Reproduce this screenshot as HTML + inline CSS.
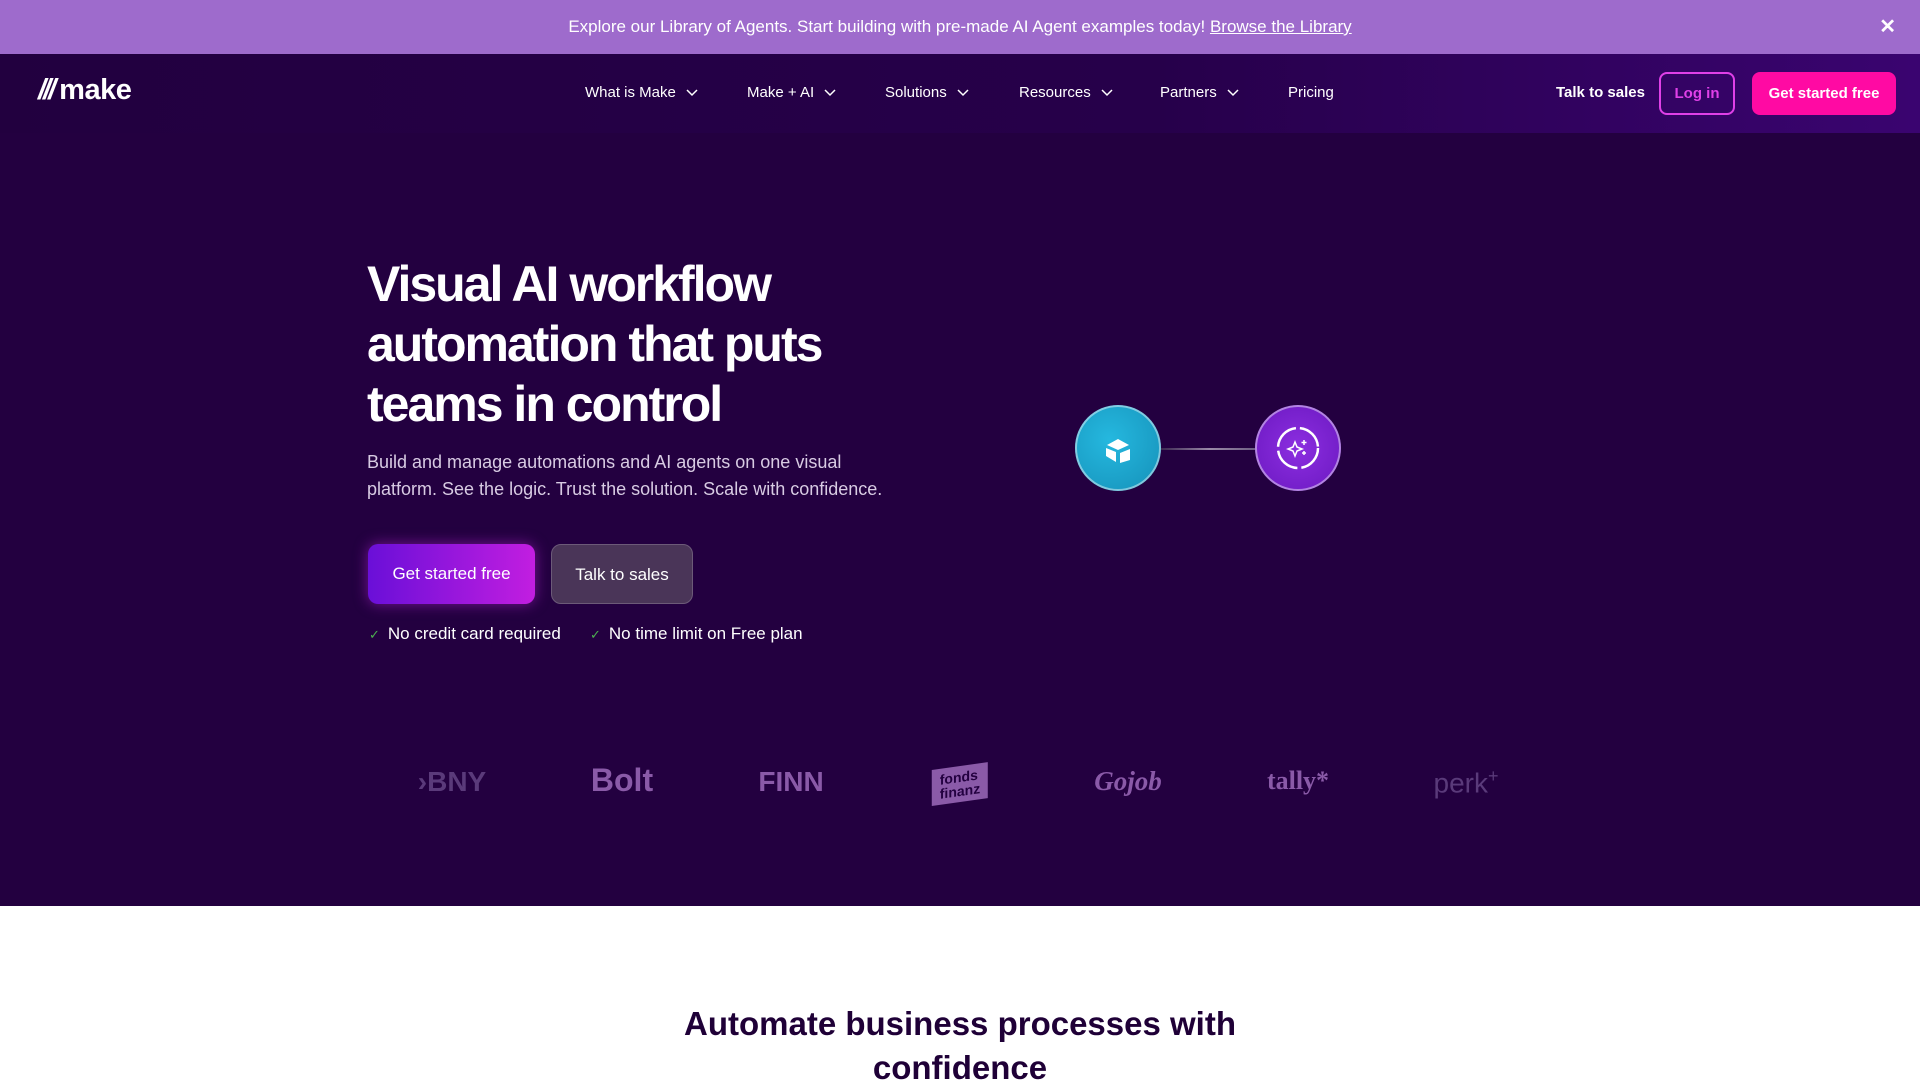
<!DOCTYPE html>
<html><head><meta charset="utf-8"><style>
*{margin:0;padding:0;box-sizing:border-box}
body{width:1920px;height:1080px;overflow:hidden;font-family:"Liberation Sans",sans-serif;background:#fff;position:relative}
.banner{position:absolute;top:0;left:0;width:1920px;height:54px;background:#9e6bcc;color:#fff;font-size:17px;text-align:center;line-height:54px}
.banner u{text-decoration:underline}
.close{position:absolute;right:24px;top:0;font-size:20px;font-weight:bold}
.nav{position:absolute;top:54px;left:0;width:1920px;height:79px;background:linear-gradient(90deg,#22003f 0%,#26004a 60%,#3a0470 100%)}
.hero{position:absolute;top:133px;left:0;width:1920px;height:773px;background:#230040}
.logo{position:absolute;left:38px;top:74px;color:#fff;font-weight:bold;font-size:29px;letter-spacing:-0.5px}
.ni{position:absolute;top:84px;color:#fff;font-size:15px}
.ni svg{margin-left:10px;vertical-align:middle}
.btn{position:absolute;border-radius:8px;font-size:15px;font-weight:bold;text-align:center}
h1{position:absolute;left:367px;top:254px;color:#fff;font-size:50px;line-height:60px;font-weight:bold;letter-spacing:-2px;width:560px}
.p{position:absolute;left:367px;top:449px;color:#d8cbe3;font-size:18px;line-height:27px;width:545px}
.chk{position:absolute;top:624px;color:#fff;font-size:17px}
.chk b{color:#4caf50;font-weight:normal;font-size:13px;margin-right:8px}
.circ{position:absolute;width:86px;height:86px;border-radius:50%;top:405px;box-shadow:inset 0 0 0 2px rgba(255,255,255,.45)}
.lg{position:absolute;top:766px;color:#7a4a9a;font-weight:bold;font-size:28px;transform:translateX(-50%)}
h2{position:absolute;top:1002px;width:1920px;text-align:center;font-size:33px;line-height:44px;color:#1f0037;font-weight:bold}
</style></head><body>
<div class="banner">Explore our Library of Agents. Start building with pre-made AI Agent examples today! <u>Browse the Library</u><span class="close">✕</span></div>
<div class="nav"></div>
<div class="hero"></div>
<div class="logo"><span style="font-style:italic;letter-spacing:-3px;margin-right:6px">///</span>make</div>
<div class="ni" style="left:585px">What is Make<svg width="12" height="8"><path d="M1 1l5 5 5-5" stroke="#fff" fill="none" stroke-width="1.5"/></svg></div>
<div class="ni" style="left:747px">Make + AI<svg width="12" height="8"><path d="M1 1l5 5 5-5" stroke="#fff" fill="none" stroke-width="1.5"/></svg></div>
<div class="ni" style="left:885px">Solutions<svg width="12" height="8"><path d="M1 1l5 5 5-5" stroke="#fff" fill="none" stroke-width="1.5"/></svg></div>
<div class="ni" style="left:1019px">Resources<svg width="12" height="8"><path d="M1 1l5 5 5-5" stroke="#fff" fill="none" stroke-width="1.5"/></svg></div>
<div class="ni" style="left:1160px">Partners<svg width="12" height="8"><path d="M1 1l5 5 5-5" stroke="#fff" fill="none" stroke-width="1.5"/></svg></div>
<div class="ni" style="left:1288px">Pricing</div>
<div class="ni" style="left:1556px;font-weight:bold">Talk to sales</div>
<div class="btn" style="left:1659px;top:72px;width:76px;height:43px;line-height:39px;border:2px solid #e040e8;color:#e040e8">Log in</div>
<div class="btn" style="left:1752px;top:72px;width:144px;height:43px;line-height:43px;background:#ff0aa3;color:#fff">Get started free</div>
<h1>Visual AI workflow automation that puts teams in control</h1>
<div class="p">Build and manage automations and AI agents on one visual platform. See the logic. Trust the solution. Scale with confidence.</div>
<div class="btn" style="left:368px;top:544px;width:167px;height:60px;line-height:60px;font-weight:normal;font-size:17px;color:#fff;background:linear-gradient(90deg,#6a0fd8,#c21ee0);border-radius:10px;box-shadow:0 0 14px rgba(200,40,230,.5)">Get started free</div>
<div class="btn" style="left:551px;top:544px;width:142px;height:60px;line-height:60px;font-weight:normal;font-size:17px;color:#fff;background:#4a3558;border:1px solid #6c5a78;border-radius:10px">Talk to sales</div>
<div class="chk" style="left:369px"><b>✓</b>No credit card required</div>
<div class="chk" style="left:590px"><b>✓</b>No time limit on Free plan</div>
<div style="position:absolute;left:1160px;top:448px;width:100px;height:2px;background:linear-gradient(90deg,#3a2550,#9a8aa8,#6a5a80)"></div>
<div class="circ" style="left:1075px;background:radial-gradient(circle at 40% 40%,#25b8df,#1590b8)">
<svg width="86" height="86"><path d="M32 40l11-6 11 6-11 5z" fill="#fff"/><path d="M31 43l10 4v10l-10-6z" fill="#fff"/><path d="M45 48l10-4v11l-10 3z" fill="#fff"/></svg></div>
<div class="circ" style="left:1255px;background:radial-gradient(circle at 50% 50%,#8c2ee0,#6a18c0)">
<svg width="86" height="86"><circle cx="43" cy="43" r="20" stroke="#fff" stroke-width="2.5" fill="none" stroke-dasharray="28 4"/><path d="M40 37l2 5 5 2-5 2-2 5-2-5-5-2 5-2z" stroke="#fff" fill="none" stroke-width="1.5"/><path d="M49 35v5M46.5 37.5h5M49 46v4M47 48h4" stroke="#fff" stroke-width="1.5"/></svg></div>
<div class="lg" style="left:452px;color:#5a3a7a">›BNY</div>
<div class="lg" style="left:622px;color:#8a5aa8;font-size:32px;top:762px">Bolt</div>
<div class="lg" style="left:791px;color:#8a5aa8">FINN</div>
<div class="lg" style="left:960px;top:766px;background:#8a5aa8;color:#230040;font-size:14px;line-height:14px;padding:4px 8px;transform:translateX(-50%) skewY(-8deg)">fonds<br>finanz</div>
<div class="lg" style="left:1128px;color:#8a5aa8;font-style:italic;font-family:'Liberation Serif',serif;font-size:27px">Gojob</div>
<div class="lg" style="left:1298px;color:#8a5aa8;font-family:'Liberation Serif',serif;font-size:26px">tally*</div>
<div class="lg" style="left:1466px;color:#5a3a7a;font-weight:normal">perk<sup style="font-size:18px">+</sup></div>
<h2>Automate business processes with<br>confidence</h2>
</body></html>
